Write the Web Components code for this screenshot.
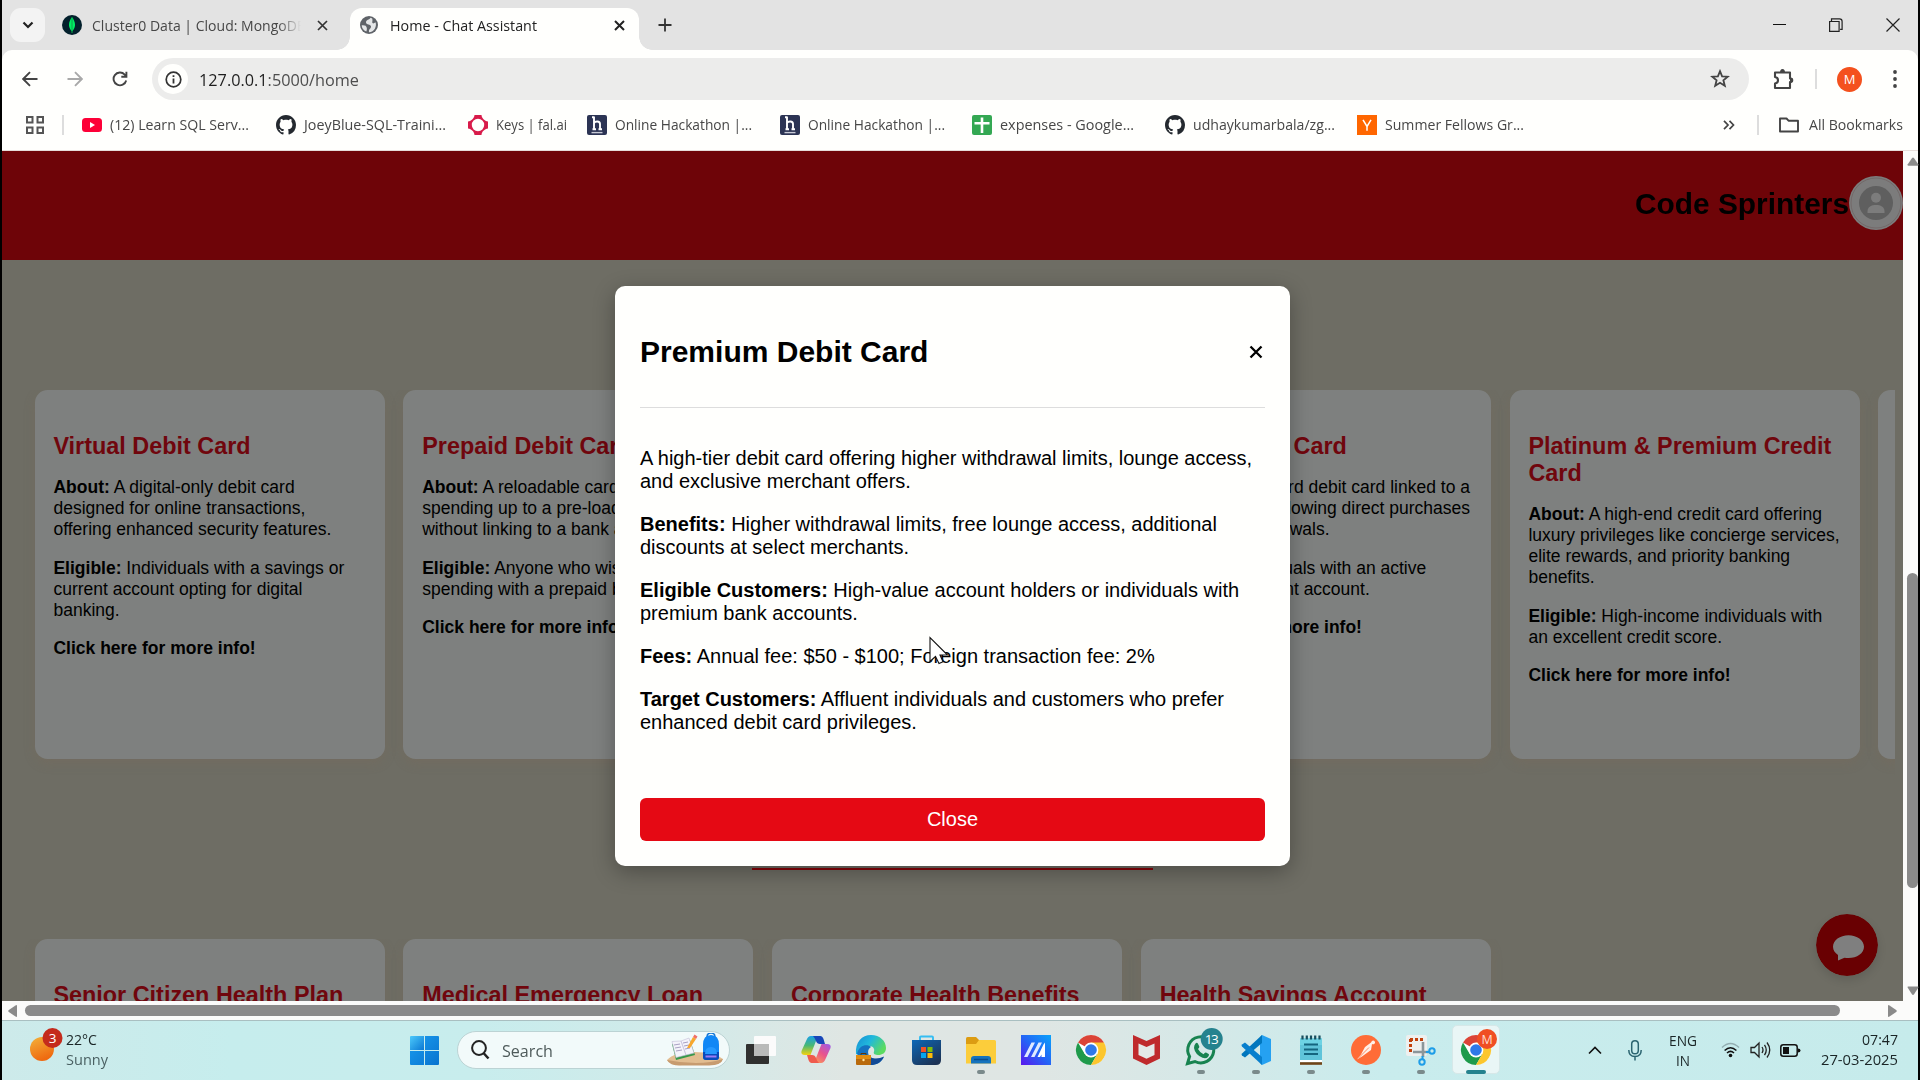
<!DOCTYPE html>
<html lang="en">
<head>
<meta charset="utf-8">
<title>Home - Chat Assistant</title>
<style>
html,body{margin:0;padding:0}
body{width:1920px;height:1080px;overflow:hidden;background:#000;font-family:"Liberation Sans",Arial,sans-serif}
</style>
</head>
<body>
<desktop-screen></desktop-screen>
<script>
const UI = '"Open Sans","Noto Sans",sans-serif';
function define(name, html, after) {
  customElements.define(name, class extends HTMLElement {
    constructor() {
      super();
      this.attachShadow({mode: 'open'});
    }
    connectedCallback() {
      if (this.shadowRoot.childNodes.length) return;
      const t = document.createElement('template');
      t.innerHTML = typeof html === 'function' ? html(this) : html;
      this.shadowRoot.append(t.content.cloneNode(true));
      if (after) after(this);
    }
  });
}

/* One line of text scaled horizontally to the width in its "w" attribute */
define('fit-text', `<style>:host{display:inline-block;white-space:nowrap;flex:none}span{display:inline-block;transform-origin:0 50%}</style><span><slot></slot></span>`, el => {
  const w = +el.getAttribute('w'), s = el.shadowRoot.querySelector('span');
  const real = s.getBoundingClientRect().width;
  el.style.width = w + 'px';
  if (real) s.style.transform = `scaleX(${w / real})`;
});

const chrome = `<circle cx="15" cy="15" r="15" fill="#fff"/><path d="M15 15 2 7.5A15 15 0 0 1 28 7.5Z" fill="#db4437"/><path d="M2 7.5A15 15 0 0 0 15 30L21.5 18.7 8.6 18.8Z" fill="#1e9a4b"/><path d="M28 7.5H15L21.5 18.7 15 30A15 15 0 0 0 28 7.5Z" fill="#fcc62e"/><circle cx="15" cy="15" r="7.4" fill="#fff"/><circle cx="15" cy="15" r="5.8" fill="#2f78e8"/>`;
const hIcon = `<svg width="20" height="20" viewBox="0 0 20 20"><rect width="20" height="20" rx="2" fill="#2c3454"/><path d="M7 1.500v13M7 8c1-2 6-2.500 6 1v5.500M5 2.300h2M5.500 14.300h3.500M11.500 14.300h3.500" fill="none" stroke="#fff" stroke-width="1.900"/><path d="M4.500 17.600h11" stroke="#c8cad6" stroke-width="1.400"/></svg>`;
const github = `<svg width="20" height="20" viewBox="0 0 16 16"><path fill="#24292f" d="M8 0C3.58 0 0 3.58 0 8c0 3.54 2.290 6.530 5.470 7.590.4.070.550-.170.550-.380 0-.190-.010-.820-.010-1.490-2.010.370-2.530-.490-2.690-.940-.090-.230-.480-.940-.820-1.130-.280-.150-.680-.520-.010-.530.630-.010 1.080.580 1.230.820.720 1.210 1.870.870 2.330.660.070-.520.280-.870.510-1.070-1.780-.200-3.640-.890-3.640-3.950 0-.870.310-1.590.820-2.150-.080-.200-.360-1.020.080-2.120 0 0 .670-.210 2.200.820.640-.180 1.320-.270 2-.270s1.360.090 2 .270c1.530-1.040 2.200-.820 2.200-.820.440 1.100.160 1.920.080 2.120.510.560.820 1.270.820 2.150 0 3.070-1.870 3.750-3.650 3.950.290.250.540.730.540 1.480 0 1.070-.010 1.930-.010 2.200 0 .210.150.460.550.380A8.010 8.010 0 0 0 16 8c0-4.420-3.580-8-8-8Z"/></svg>`;
const icons = {
  youtube: `<svg width="20" height="20" viewBox="0 0 20 20"><rect y="3" width="20" height="14" rx="3.500" fill="#fd0037"/><path d="M8 7v6l5-3Z" fill="#fff"/></svg>`,
  github,
  fal: `<svg width="20" height="20" viewBox="0 0 20 20"><path fill="#d81b4a" fill-rule="evenodd" d="M6.500 0h7c.2 3.300 3 6 6.500 6.500v7c-3.500.500-6.300 3.200-6.500 6.500h-7C6.300 16.700 3.500 14 0 13.500v-7C3.500 6 6.300 3.300 6.500 0ZM10 3.800A6.200 6.200 0 1 0 10 16.200 6.200 6.200 0 0 0 10 3.800Z"/></svg>`,
  h: hIcon,
  sheets: `<svg width="20" height="20" viewBox="0 0 20 20"><rect width="20" height="20" rx="2" fill="#34a853"/><path d="M10 2.500v15.500M2.500 8.300h15" stroke="#fff" stroke-width="2.600"/></svg>`,
  yc: `<svg width="20" height="20" viewBox="0 0 20 20"><rect width="20" height="20" fill="#ff6600"/><path d="M6 4.800 10 11.500 14 4.800M10 11v4.700" stroke="#fff" stroke-width="1.500" fill="none"/></svg>`
};

define('tab-strip', `<style>
:host{display:flex;height:50px;background:#e3e3e3;align-items:center;font:14.600px/20px ${UI};color:#474747;box-sizing:border-box;padding-left:8px}
.search{width:35px;height:34px;border-radius:11px;background:#f3f3f3;display:grid;place-items:center}
.tab{display:flex;align-items:center;height:42px}
.one{width:288px;margin-left:17px}
.one .t{width:210px;overflow:hidden;margin-left:10px;-webkit-mask:linear-gradient(90deg,#000 186px,transparent 209px);mask:linear-gradient(90deg,#000 186px,transparent 209px)}
.one .x{margin-left:15px}
.two{position:relative;align-self:flex-end;width:289px;box-sizing:border-box;background:#fffffd;border-radius:12px 12px 0 0;padding:0 0 8px 10px;color:#222}
.two::before,.two::after{content:"";position:absolute;bottom:0;width:13px;height:13px}
.two::before{left:-13px;background:radial-gradient(circle at 0 0,transparent 12.500px,#fffffd 13px)}
.two::after{right:-13px;background:radial-gradient(circle at 100% 0,transparent 12.500px,#fffffd 13px)}
.two .t{margin-left:12px}.two .x{margin-left:77px}
.plus{margin-left:19px}.win{display:flex;align-items:center;margin-left:auto;gap:43px;padding-right:18px}
svg{display:block;flex:none}
</style>
<div class="search"><svg width="12" height="8"><path d="M1.500 1.500 6 6 10.500 1.500" fill="none" stroke="#222" stroke-width="2.200"/></svg></div>
<div class="tab one"><svg width="20" height="20"><circle cx="10" cy="10" r="10" fill="#03202c"/><path d="M10 2C6.500 7 5.500 12 10 16.500 14.500 12 13.500 7 10 2Z" fill="#00ed64"/><path d="M10 3v15" stroke="#0aa24b"/></svg><div class="t"><fit-text w="214">Cluster0 Data | Cloud: MongoDB</fit-text></div><svg class="x" width="11" height="11"><path d="M1 1l9 9M10 1 1 10" stroke="#333" stroke-width="1.700"/></svg></div>
<div class="tab two"><svg width="18" height="18" viewBox="0 0 18 18"><circle cx="9" cy="9" r="9" fill="#5f6368"/><path d="M10.500 1.800C9.500 4 6 3.500 6 6.500c0 2.500 5 1.500 5 4s-2.500 2-2 5.700c5.500-.200 8-6 6.500-10-1.500.800-2 1.800-3 .800-.800-1 .500-2.500-.300-4.500ZM1.700 9.300c2 .3 3.300-.3 4.300 1s1.300 3 .3 5.200C3.500 14.500 1.700 12 1.700 9.300Z" fill="#e4e6e7"/></svg><fit-text class="t" w="147">Home - Chat Assistant</fit-text><svg class="x" width="11" height="11"><path d="M1 1l9 9M10 1 1 10" stroke="#222" stroke-width="2"/></svg></div>
<svg class="plus" width="14" height="14"><path d="M7 .5v13M.5 7h13" stroke="#333" stroke-width="1.800"/></svg>
<div class="win"><svg width="13" height="13"><path d="M0 5.500h13" stroke="#111"/></svg><svg width="14" height="14"><path d="M.6 3.500h9.500v9.900H.6ZM2.500 3V.8h8q2.600 0 2.600 2.600v8h-2" fill="none" stroke="#222" stroke-width="1.200"/></svg><svg width="14" height="14"><path d="M.5.500l13 13M13.500.500l-13 13" stroke="#222" stroke-width="1.200"/></svg></div>`);

define('tool-bar', `<style>
:host{display:flex;height:50px;box-sizing:border-box;padding:8px 0 0 20px;font:17.200px/24px ${UI};color:#4d4d4d;background:#fffffd}
svg{display:block;flex:none}.nav{display:flex;align-items:center;gap:29px;width:130px;flex:none}
.box{width:1597px;height:42px;background:#ececeb;border-radius:21px;display:flex;align-items:center;box-sizing:border-box;padding:0 19px 0 6px;flex:none}
.i{width:30px;height:30px;border-radius:50%;background:#fffffd;display:grid;place-items:center;margin-right:11px}
.star{margin-left:auto}.r{display:flex;align-items:center;height:42px}
.m{width:25px;height:25px;border-radius:50%;background:#f4511e;color:#fff;font-size:13px;display:grid;place-items:center;margin:0 30px 0 20px}
b{font-weight:400;color:#1e1e1e}fit-text{margin-top:1px}
</style>
<div class="nav">
<svg width="16" height="16"><path d="M15.500 8H1.500M8 1.200 1.200 8 8 14.800" fill="none" stroke="#444" stroke-width="1.900"/></svg>
<svg width="16" height="16"><path d="M.5 8h14M8 1.200 14.800 8 8 14.800" fill="none" stroke="#a9a9a9" stroke-width="1.900"/></svg>
<svg width="16" height="16"><path d="M14.200 9.500A6.400 6.400 0 1 1 12.700 3.600L14 5M14.400.700V5.800H9.300" fill="none" stroke="#444" stroke-width="1.900"/></svg></div>
<div class="box"><div class="i"><svg width="17" height="17"><circle cx="8.500" cy="8.500" r="7.300" fill="none" stroke="#333" stroke-width="1.700"/><path d="M8.500 7.500v5M8.500 4.300v1.800" stroke="#333" stroke-width="1.800"/></svg></div><fit-text w="160"><b>127.0.0.1</b>:5000/home</fit-text>
<svg class="star" width="20" height="20" viewBox="0 0 20 20"><path d="M10 2.200 12.100 7.300 17.700 7.700 13.400 11.300 14.800 16.800 10 13.800 5.200 16.800 6.600 11.300 2.300 7.700 7.900 7.300Z" fill="none" stroke="#444" stroke-width="1.800"/></svg></div>
<div class="r"><svg style="margin-left:24px" width="22" height="22" viewBox="0 0 22 22"><path d="M2 4.500H17V10.500q2 0 2 1.700T17 14V20H2V15.500q3-.500 3-3.300T2 9Z" fill="none" stroke="#444" stroke-width="2.100" stroke-linejoin="round"/><path d="M7 4.500q0-3.500 2.500-3.500T12 4.500ZM17 9.500q3.300 0 3.300 2.700T17 15Z" fill="#444"/></svg>
<svg style="margin-left:20px" width="2" height="20"><path d="M1 0v20" stroke="#ddd" stroke-width="2"/></svg><div class="m">M</div><svg width="4" height="20" style="margin-left:1px"><circle cx="2" cy="3" r="1.900" fill="#444"/><circle cx="2" cy="10" r="1.900" fill="#444"/><circle cx="2" cy="17" r="1.900" fill="#444"/></svg></div>`);

define('book-mark', el => `<style>:host{display:flex;align-items:center;gap:8px;flex:none}svg{display:block;flex:none}fit-text{margin-top:-2px}</style>${icons[el.getAttribute('icon')]}<fit-text w="${el.getAttribute('w')}"><slot></slot></fit-text>`, el => {
  const s = el.shadowRoot.querySelector('fit-text').shadowRoot.querySelector('span');
  s.style.transform = 'none';
  s.style.transform = `scaleX(${+el.getAttribute('w') / s.getBoundingClientRect().width})`;
});

define('bookmark-bar', `<style>
:host{display:flex;align-items:center;height:51px;box-sizing:border-box;border-bottom:1px solid #e6dcd9;padding:0 15px 1px 24px;background:#fffffd;font:14.600px/20px ${UI};color:#474747}
svg{display:block;flex:none}.list{display:flex}
.list>*{margin-right:28px}
</style>
<svg width="18" height="18"><path d="M1 1h5.500v5.500H1ZM11.500 1H17v5.500h-5.500ZM1 11.500h5.500V17H1ZM11.500 11.500H17V17h-5.500Z" fill="none" stroke="#555" stroke-width="2"/></svg>
<svg style="margin:0 18px 0 18px" width="2" height="20"><path d="M1 0v20" stroke="#ddd" stroke-width="2"/></svg>
<div class="list">
<book-mark icon="youtube" w="139" style="margin-right:26.500px">(12) Learn SQL Serv...</book-mark>
<book-mark icon="github" w="142" style="margin-right:22px">JoeyBlue-SQL-Traini...</book-mark>
<book-mark icon="fal" w="71" style="margin-right:20.500px">Keys | fal.ai</book-mark>
<book-mark icon="h" w="137">Online Hackathon |...</book-mark>
<book-mark icon="h" w="137" style="margin-right:27px">Online Hackathon |...</book-mark>
<book-mark icon="sheets" w="134" style="margin-right:31px">expenses - Google...</book-mark>
<book-mark icon="github" w="142" style="margin-right:22px">udhaykumarbala/zg...</book-mark>
<book-mark icon="yc" w="139">Summer Fellows Gr...</book-mark></div>
<svg style="margin-left:auto" width="12" height="10"><path d="M1 .8 5 5 1 9.200M6.500.800 10.500 5 6.500 9.200" fill="none" stroke="#444" stroke-width="1.700"/></svg>
<svg style="margin:0 20px 0 22px" width="2" height="20"><path d="M1 0v20" stroke="#ddd" stroke-width="2"/></svg>
<svg width="20" height="16"><path d="M1 14.500V1.500h6.500l2 2.200H19v10.800Z" fill="none" stroke="#444" stroke-width="1.900" stroke-linejoin="round"/></svg>
<fit-text w="94" style="margin:-2px 0 0 10px">All Bookmarks</fit-text>`);

define('product-card', `<style>
:host{display:block;flex:none;width:350px;height:369px;box-sizing:border-box;padding:43.300px 18.750px 0;border-radius:12.500px;background:#7e807f;box-shadow:0 4px 12px rgba(130,105,80,.22);font-size:17.500px;line-height:21px;color:#000;white-space:nowrap}
h3{margin:0 0 17px;font-size:23.400px;line-height:27px;color:#70060d}
</style><h3><slot name="title"></slot></h3><slot></slot>`);

define('page-header', `<style>
:host{display:flex;height:109px;background:#6e0408;align-items:center;justify-content:flex-end;box-sizing:border-box;padding-bottom:5px}
h1{margin:2px 0 0 0;font-size:30px;line-height:34px;color:#000}svg{display:block}
</style><h1><fit-text w="214">Code Sprinters</fit-text></h1>
<svg width="54" height="54"><circle cx="27" cy="27" r="27" fill="#7c7c7c"/><circle cx="27" cy="27" r="25" fill="none" stroke="#716565" stroke-width=".8"/><circle cx="27" cy="27" r="17" fill="#5f5f5f"/><circle cx="27" cy="21.800" r="5" fill="#7c7c7c"/><path d="M18.500 35.500c0-5 4-6.500 8.500-6.500s8.500 1.500 8.500 6.500v1.500h-17Z" fill="#7c7c7c"/></svg>`);

define('info-dialog', `<style>
:host{display:flex;flex-direction:column;width:675px;height:580px;box-sizing:border-box;padding:49px 25px 25px;background:#fffffd;border-radius:10px;box-shadow:0 6px 22px rgba(0,0,0,.3);font-size:20px;line-height:23px;color:#000}
header{display:flex;justify-content:space-between;align-items:center;height:34px;padding-bottom:37.600px;border-bottom:1px solid #ddd}
h2{margin:0;font-size:30px;line-height:34px}
.body{padding-top:39px;flex:1}
button{height:43px;border:0;border-radius:6px;background:#e50914;color:#fff;font:20px/23px "Liberation Sans",Arial,sans-serif;flex:none;padding:0}
.x{padding-right:2px}svg{display:block}
</style><header><h2><slot name="title"></slot></h2><svg class="x" width="14" height="14"><path d="M1.500 1.500l11 11M12.500 1.500l-11 11" stroke="#000" stroke-width="2.300"/></svg></header><div class="body"><slot></slot></div><button>Close</button>`);

const click = '<p><b>Click here for more info!</b></p>';
define('web-page', `<style>
:host{display:block;width:1901px;height:850px;overflow:hidden;position:relative;background:#6e6d64}
.row{display:flex;gap:18.750px;width:1860.300px;padding:0 0 60px 32.700px;overflow:hidden;margin-top:130px}
.row.b{margin-top:120px;padding-bottom:0}
info-dialog{position:absolute;left:613px;top:135px}
.line{position:absolute;left:750px;top:717px;width:401px;height:2px;background:#6e0205;z-index:1}
.chat{position:absolute;left:1814px;top:763px;border-radius:50%;box-shadow:0 4px 10px rgba(0,0,0,.12)}
.cur{position:absolute;left:927px;top:485px}svg{display:block}
p{margin:0 0 20px}product-card p{margin:0 0 18px}product-card p:nth-last-child(2){margin-bottom:17px}
</style>
<page-header></page-header>
<div class="row">
<product-card><span slot="title">Virtual Debit Card</span><p><b>About:</b> A digital-only debit card<br>designed for online transactions,<br>offering enhanced security features.</p><p><b>Eligible:</b> Individuals with a savings or<br>current account opting for digital<br>banking.</p>${click}</product-card>
<product-card><span slot="title">Prepaid Debit Card</span><p><b>About:</b> A reloadable card<br>spending up to a pre-loaded<br>without linking to a bank account.</p><p><b>Eligible:</b> Anyone who wishes<br>spending with a prepaid balance.</p>${click}</product-card>
<product-card></product-card>
<product-card><span slot="title">Basic Debit Card</span><p><b>About:</b> A standard debit card linked to a<br>bank account, allowing direct purchases<br>and ATM withdrawals.</p><p><b>Eligible:</b> Individuals with an active<br>savings or current account.</p>${click}</product-card>
<product-card><span slot="title">Platinum &amp; Premium Credit<br>Card</span><p><b>About:</b> A high-end credit card offering<br>luxury privileges like concierge services,<br>elite rewards, and priority banking<br>benefits.</p><p><b>Eligible:</b> High-income individuals with<br>an excellent credit score.</p>${click}</product-card>
<product-card></product-card>
</div>
<div class="row b">
<product-card><span slot="title">Senior Citizen Health Plan</span></product-card>
<product-card><span slot="title">Medical Emergency Loan</span></product-card>
<product-card><span slot="title">Corporate Health Benefits</span></product-card>
<product-card><span slot="title">Health Savings Account</span></product-card>
</div>
<div class="line"></div>
<svg class="chat" width="62" height="62"><circle cx="31" cy="31" r="31" fill="#690002"/><path d="M32.500 21.300c-8.500 0-15.500 5-15.500 11.500 0 3.300 2 6.300 5 8.300v5.400l6.500-2.700c1.300.2 2.600.3 4 .3 8.500 0 15.500-4.800 15.500-11.300S41 21.300 32.500 21.300Z" fill="#7f7f7f"/></svg>
<info-dialog><span slot="title">Premium Debit Card</span>
<p>A high-tier debit card offering higher withdrawal limits, lounge access,<br>and exclusive merchant offers.</p>
<p><b>Benefits:</b> Higher withdrawal limits, free lounge access, additional<br>discounts at select merchants.</p>
<p><b>Eligible Customers:</b> High-value account holders or individuals with<br>premium bank accounts.</p>
<p><b>Fees:</b> Annual fee: $50 - $100; Foreign transaction fee: 2%</p>
<p><b>Target Customers:</b> Affluent individuals and customers who prefer<br>enhanced debit card privileges.</p></info-dialog>
<svg class="cur" width="22" height="30"><path d="M1 1.500V25.500L6.500 20.500 10 27.500 14 25.800 11 19H18.500Z" fill="#fff" stroke="#111" stroke-width="1.100"/></svg>`);

define('v-scroll', `<style>:host{display:flex;flex-direction:column;align-items:center;width:15px;height:850px;background:#fbfbfa;padding-left:4px;box-sizing:border-box}
svg{display:block;margin-top:6px;flex:none}i{display:block;width:11px;height:315px;border-radius:6px;background:#8a8a8a;margin:407px 0 92px}</style>
<svg width="12" height="9" viewBox="0 0 13 9"><path d="M1.500 9Q0 9 .8 7.500L5.500.700Q6.500-.200 7.500.700L12.200 7.500Q13 9 11.500 9Z" fill="#8a8a8a"/></svg><i></i><svg width="12" height="10" viewBox="0 0 13 10"><path d="M1.500 0Q0 0 .8 1.500L5.500 8.800Q6.500 9.700 7.500 8.800L12.200 1.500Q13 0 11.500 0Z" fill="#8a8a8a"/></svg>`);
define('h-scroll', `<style>:host{display:flex;align-items:center;height:19px;background:#fbfbfa;padding:0 21px 0 6px}svg{display:block}i{display:block;width:1815px;height:11px;border-radius:6px;background:#8a8a8a;margin:0 48px 0 8px;flex:none}</style>
<svg width="9" height="12"><path d="M9 .8V11.200Q9 12.500 7.500 11.500L.8 7Q-.3 6 .8 5L7.500.500Q9-.5 9 .8Z" fill="#8a8a8a"/></svg><i></i><svg width="9" height="12"><path d="M0 .8V11.200Q0 12.500 1.500 11.500L8.200 7Q9.300 6 8.200 5L1.500.500Q0-.5 0 .8Z" fill="#8a8a8a"/></svg>`);

/* Taskbar button: 55px cell with an optional running mark */
define('task-app', `<style>:host{display:flex;flex:none;width:55px;height:60px;flex-direction:column;align-items:center;justify-content:flex-start;box-sizing:border-box;padding-top:10px;position:relative}
::slotted(svg){display:block;overflow:visible;margin-top:5px}i{display:none;width:8px;height:4px;border-radius:2px;background:#7a8a8b;margin-top:5px}:host([run]) i{display:block}
:host([active])::before{content:"";position:absolute;left:3.500px;top:5px;width:46px;height:47px;border:1px solid #d6e8e8;border-radius:5px;background:#e9f6f6}
:host([active]) ::slotted(svg){position:relative}:host([active]) i{display:block;width:20px;background:#25828e;position:relative}</style><slot></slot><i></i>`);

define('task-bar', `<style>
:host{display:flex;height:60px;box-sizing:border-box;border-top:1px solid #a9bfc1;background:linear-gradient(90deg,#cdeaea 0,#c6eded 12%,#c8eded 25%,#d2eae9 36%,#dfe6e3 44%,#dfe6e4 54%,#d6e8e7 62%,#c9eced 72%,#c6ebeb 100%);font:14.600px/20px ${UI};color:#1a2526}
svg{display:block;flex:none}
.w{display:flex;width:380px;padding:7px 0 0 28px;box-sizing:border-box;flex:none}.w div{display:flex;flex-direction:column;margin-left:3px;padding-top:1px}.w div :last-child{color:#4b6163}
.start{margin:15px 18px 0 28px}
.s{display:flex;align-items:center;width:273px;height:38px;box-sizing:border-box;border:1px solid #bcd3d4;border-radius:19px;background:#f2fafa;margin-top:10px;padding:0 5px 0 13px;font-size:17.200px;color:#4f5b5b;flex:none}
.s fit-text{margin:1px 0 0 12px}.ill{margin-left:auto}
.apps{display:flex;margin-left:3.500px;margin-top:-1px;flex:none}
.tray{display:flex;margin-left:auto;padding-right:20px;height:58px;align-items:center}
.col{display:flex;flex-direction:column;margin-top:-1px}.c{align-items:center}.e{align-items:flex-end}
</style>
<div class="w"><svg width="33" height="36"><defs><linearGradient id="sun" x2="0.4" y2="1"><stop stop-color="#f3b23a"/><stop offset="1" stop-color="#ef6a10"/></linearGradient></defs><circle cx="12" cy="21" r="12" fill="url(#sun)"/><circle cx="22.500" cy="10" r="10" fill="#c42b1c"/><text x="22.500" y="15" font-size="13.500" fill="#fff" text-anchor="middle">3</text></svg><div><fit-text w="31">22°C</fit-text><fit-text w="42">Sunny</fit-text></div></div>
<svg class="start" width="29" height="29"><defs><linearGradient id="w" x2="1" y2="1" gradientUnits="objectBoundingBox"><stop stop-color="#4cc9fb"/><stop offset="1" stop-color="#0a78d4"/></linearGradient><linearGradient id="w2" x2="1" y2="1"><stop stop-color="#1b9df0"/><stop offset="1" stop-color="#0873cf"/></linearGradient></defs><path d="M0 1q0-1 1-1h13v14H0Z" fill="url(#w)"/><path d="M15 0h13q1 0 1 1v13H15ZM0 15h14v14H1q-1 0-1-1ZM15 15h14v13q0 1-1 1H15Z" fill="url(#w2)"/></svg>
<div class="s"><svg width="19" height="20"><circle cx="8" cy="8" r="6.900" fill="none" stroke="#222" stroke-width="2"/><path d="M12.500 13 17.500 18.500" stroke="#222" stroke-width="2.500"/></svg><fit-text w="51">Search</fit-text>
<svg class="ill" width="58" height="34"><path d="M1 27Q8 19 28 19T57 26q-2 6-14 6H16Q4 33 1 27Z" fill="#e2bd91"/><path d="M1 27q14 3 29 3t27-4q-2 6.500-14 6.500H16Q4 33 1 27Z" fill="#c79b70"/><path d="M6 11 24 7 29 22 10 27Z" fill="#36984a"/><path d="M6 8.500 15 8 20 22 10 24.500ZM15 8 23 5 28 20 20 22Z" fill="#f4f3fa" stroke="#c5bfd8" stroke-width=".6"/><path d="M8 12l6-1M9 15l6-1M10 18l6-1M17 10l5-1M18 13l5-1M19 16l5-1" stroke="#a8a1c3"/><path d="M21 15 27 4 30 6 24 15Z" fill="#f8a72c"/><path d="M27 4 28.500 1.500 31.500 3.500 30 6Z" fill="#f07068"/><path d="M41 4q0-4 4-4t4 4" fill="none" stroke="#1877d3" stroke-width="1.500"/><path d="M37 12q0-10 8-10t8 10v12q0 3-3 3H40q-3 0-3-3Z" fill="#1187f5"/><path d="M37 19v5q0 3 3 3h10q3 0 3-3v-5Z" fill="#084abc"/><path d="M39 21q0-7 6-7t6 7Z" fill="#2699ff"/><path d="M39.500 22.500h11v2h-11Z" fill="#9d7af4"/></svg></div>
<div class="apps">
<task-app style="padding-top:11px"><svg width="30" height="28"><rect y="8" width="23" height="20" rx="1" fill="#30302f"/><rect x="8" width="22" height="20" rx="1" fill="#fbfbfb"/><rect x="8" y="8" width="15" height="12" fill="#b9bab9"/></svg></task-app>
<task-app><svg width="30" height="30" viewBox="0 0 30 30"><defs><linearGradient id="ca" x2="0" y2="1"><stop stop-color="#1aa0e8"/><stop offset=".5" stop-color="#48b874"/><stop offset="1" stop-color="#f4d20f"/></linearGradient><linearGradient id="cb" x1="1" x2="0.2" y2="1"><stop stop-color="#9a5bec"/><stop offset=".5" stop-color="#e9538c"/><stop offset="1" stop-color="#fda053"/></linearGradient></defs><path d="M20 1H10Q7 1 5.500 5L.5 16Q-.5 20 4 20H9.500L15 6Q16 4 18 4H21Z" fill="url(#ca)"/><path d="M12 1h7q2.500 0 3.500 3L24 9H19q-3 0-4-3T12 1Z" fill="#1746b8"/><path d="M10 28H20Q23 28 24.500 24L29.500 13Q30.500 9 26 9H20.500L15 23Q14 25 12 25H9Z" fill="url(#cb)"/><path d="M18 28h-7q-2.500 0-3.500-3L6 20h5q3 0 4 3t3 5Z" fill="#ef5b4d"/></svg></task-app>
<task-app><svg width="30" height="30"><defs><linearGradient id="ed" x2="1" y2=".5"><stop stop-color="#178bd4"/><stop offset=".5" stop-color="#20b8dc"/><stop offset="1" stop-color="#5bdb60"/></linearGradient></defs><path d="M0 19C-1 7 6 0 15 0s15 6 15 13c0 5-4 7-7.500 7S17 19 18 16.500 17 11 13.500 11 3 14 3 20Z" fill="url(#ed)"/><path d="M1 19C3 9 12 9 15 12c-4 2-4 9 1 11 4 2 9 1 12-1-3 6-8 8-13 8Z" fill="#1572c0"/><path d="M14 22c5 3 10 1 14-.5C25 28 20 30 14 30Z" fill="#124a96"/><rect y="20" width="15" height="10" rx="1" fill="#b96a0c"/><path d="M0 20h15v4H0Z" fill="#e18d11"/><path d="M5 20v-1.500h5V20" fill="none" stroke="#5f3606"/><circle cx="7.500" cy="25" r="1.200" fill="#ffe5a0"/></svg></task-app>
<task-app><svg width="29" height="30"><defs><linearGradient id="st" x2=".7" y2="1"><stop stop-color="#0d68b8"/><stop offset="1" stop-color="#1c3355"/></linearGradient></defs><path d="M8 6V2.500Q8 1.500 9 1.500H20q1 0 1 1V6" fill="none" stroke="#35bdf2" stroke-width="1.900"/><path d="M0 5h29v20q0 5-5 5H5q-5 0-5-5Z" fill="url(#st)"/><path d="M9 12h5v5H9Z" fill="#f35325"/><path d="M15.500 12h5v5h-5Z" fill="#81bc06"/><path d="M9 18h5v5H9Z" fill="#05a6f0"/><path d="M15.500 18h5v5h-5Z" fill="#ffba08"/></svg></task-app>
<task-app run><svg width="30" height="30"><path d="M0 3.500Q0 2 1.500 2H10l3 3v7H0Z" fill="#dc9c12"/><path d="M0 9h10l3-4h15.500Q30 5 30 6.500V28.500H0Z" fill="#fccd3b"/><path d="M5 28.500V24q0-3 3-3H22q3 0 3 3v4.500Z" fill="#1673bd"/><path d="M8 24.500h14" stroke="#0a4d8d" stroke-width="1.500"/></svg></task-app>
<task-app><svg width="30" height="30"><defs><linearGradient id="ma" x1="1" x2="0" y2="1"><stop stop-color="#09a3fb"/><stop offset=".5" stop-color="#2465f6"/><stop offset="1" stop-color="#5a16ed"/></linearGradient></defs><rect width="30" height="30" fill="url(#ma)"/><path d="M3 22 10.500 7.500H14L6.500 22ZM10 22 17.500 7.500H21L13.500 22Z" fill="#dfe9ff"/><path d="M16.500 22 22.500 9.500 24 7.500V22H20.500V19.500L19 22Z" fill="#fff"/></svg></task-app>
<task-app><svg width="30" height="30">${chrome}</svg></task-app>
<task-app><svg width="27" height="30"><path d="M0 0 13.500 6 27 0V23.500L13.500 30 0 23.500Z" fill="#bf2a2c"/><path d="M5.500 8.500 13.500 12 21.500 8.500V20L13.500 23.800 5.500 20Z" fill="#e4e9e7"/></svg></task-app>
<task-app run><svg width="30" height="30"><path d="M1.500 28.500 3.600 21.500A13 13 0 1 1 9 26.500Z" fill="none" stroke="#188350" stroke-width="3"/><path d="M9.500 8.500q1.500-1.500 2.500.3l1.300 2.700q.3 1-1.300 2.500 2 3.800 5.500 5.300 1.500-2.200 2.500-1.800l2.700 1.500q1 .7-.7 3-2 2-5.500.8Q9 19.500 8 13q0-3 1.500-4.500Z" fill="#188350"/><circle cx="25.700" cy="4" r="11" fill="#25828e"/><text x="25.700" y="9" font-size="13.500" fill="#fff" text-anchor="middle" textLength="14">13</text></svg></task-app>
<task-app run><svg width="30" height="30"><path d="M21 0 30 4V26L21 30 19 28V2Z" fill="#25a1f1"/><path d="M21 0V8L4 22.500 1 20.500Q0 19.500 1 18.500Z" fill="#0076bd"/><path d="M21 30V22L4 7.500 1 9.500Q0 10.500 1 11.500Z" fill="#087fcd"/></svg></task-app>
<task-app run><svg width="24" height="30"><path d="M1 3.500h22V25H1Z" fill="#5fc4da"/><path d="M1 3.500h22V10H1Z" fill="#6dd3e4"/><path d="M1 25h22v2H1Z" fill="#fff"/><path d="M1 27.200h22v2.600H1Z" fill="#704417"/><path d="M5 9.500h14M5 14.500h14M5 19h14" stroke="#14657f" stroke-width="1.900"/><path d="M3.500.500v4M7.800.500v4M12 .5v4M16.200.500v4M20.500.500v4" stroke="#174e5e" stroke-width="2.200"/></svg></task-app>
<task-app run><svg width="30" height="30"><circle cx="15" cy="15" r="15" fill="#ff6c37"/><path d="M20 7.500q1-2.500 3-1.800 2 1.300.3 3.300-1.500.7-2.300 0l-1 6L11 21.500 6 24.500l4-5 4-7.500Z" fill="#fff0e8"/><path d="M7 23.500 18 12.500" stroke="#ff8a5e"/></svg></task-app>
<task-app run><svg width="30" height="30"><rect x="0" y="0" width="21" height="21" rx="2" fill="#eef0ef"/><path d="M4 4.500h13M4.500 4v13" stroke="#c2410c" stroke-width="3" stroke-dasharray="3 2"/><path d="M17 7V22M7 17H24" stroke="#8b969a" stroke-width="2.600"/><circle cx="26" cy="16" r="2.700" fill="none" stroke="#1e9de8" stroke-width="2"/><circle cx="16" cy="27" r="2.700" fill="none" stroke="#1e9de8" stroke-width="2"/><path d="M20 17h4M16.500 21v3" stroke="#1e9de8" stroke-width="2"/></svg></task-app>
<task-app active><svg width="30" height="30">${chrome}<circle cx="26" cy="4" r="10" fill="#f04e23"/><text x="26" y="8.500" font-size="12.500" fill="#ffdccf" text-anchor="middle">M</text></svg></task-app>
</div>
<div class="tray">
<svg width="14" height="9"><path d="M1 7.500 7 1.500 13 7.500" fill="none" stroke="#111" stroke-width="1.600"/></svg>
<svg style="margin-left:26px" width="14" height="21" fill="none" stroke="#2a6470" stroke-width="1.500"><rect x="3.700" y=".8" width="6.600" height="13" rx="3.300"/><path d="M.8 10q0 6.500 6.200 6.500t6.200-6.500M7 16.500v4"/></svg>
<div class="col c" style="margin-left:27px"><fit-text w="28">ENG</fit-text><fit-text w="14">IN</fit-text></div>
<svg style="margin-left:24px" width="19" height="16" fill="none" stroke-width="1.500"><path d="M1 5.500Q9.500-2.500 18 5.500" stroke="#93aeb1"/><path d="M3.600 8.500q5.900-5.500 11.800 0M6 11q3.500-3.200 7 0" stroke="#111"/><circle cx="9.500" cy="13.500" r="1.800" fill="#111"/></svg>
<svg style="margin-left:10px" width="21" height="18" fill="none" stroke="#222" stroke-width="1.300"><path d="M1 6.500H4.500L9 2V16L4.500 11.500H1Z"/><path d="M12 6q2 3 0 6M14.500 3.800q3.500 5.200 0 10.400M17 1.500q5.500 7.500 0 15"/></svg>
<svg style="margin-left:9px" width="21" height="13"><rect x=".8" y=".8" width="16.400" height="11.400" rx="2.500" fill="none" stroke="#111" stroke-width="1.500"/><rect x="3" y="3" width="6" height="7" fill="#111"/><path d="M18 4.500q2.500 0 2.500 2T18 8.500Z" fill="#111"/></svg>
<div class="col e" style="margin-left:20px;margin-top:-2px"><fit-text w="36">07:47</fit-text><fit-text w="77">27-03-2025</fit-text></div>
</div>`);

define('desktop-screen', `<style>:host{display:flex;flex-direction:column;width:1920px;height:1080px;background:#000;overflow:hidden}
.win{padding:0 2px;display:flex;flex-direction:column}.chrome{background:#e3e3e3}.bar{border-radius:10px 10px 0 0;overflow:hidden}.view{display:flex}task-bar{margin:0 2px;flex:none}</style>
<div class="win"><div class="chrome"><tab-strip></tab-strip><div class="bar"><tool-bar></tool-bar></div></div><bookmark-bar></bookmark-bar><div class="view"><web-page></web-page><v-scroll></v-scroll></div><h-scroll></h-scroll></div><task-bar></task-bar>`);
</script>
</body>
</html>
